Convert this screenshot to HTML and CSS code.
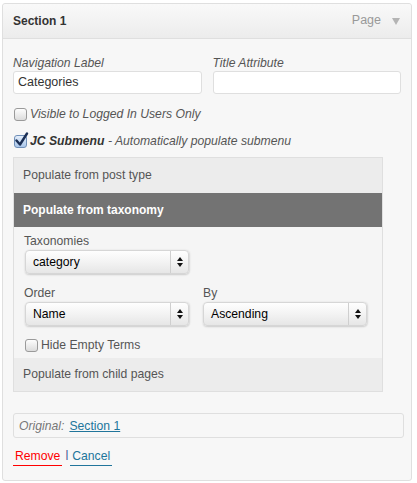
FILE: index.html
```html
<!DOCTYPE html>
<html>
<head>
<meta charset="utf-8">
<link rel="stylesheet" href="styles.css">
</head>
<body>
<div class="item">
  <div class="item-head">
    <span class="title">Section 1</span>
    <span class="controls"><span class="type">Page</span><svg class="toggle" width="8" height="7" viewBox="0 0 8 7"><path d="M0 0H8L4 7Z" fill="#b4b4b4"/></svg></span>
  </div>
  <div class="settings">
    <div class="fields">
      <div class="field"><span class="lbl">Navigation Label</span><span class="input">Categories</span></div>
      <div class="field"><span class="lbl">Title Attribute</span><span class="input"></span></div>
    </div>
    <div class="check-row"><span class="cb"></span><em class="ctext">Visible to Logged In Users Only</em></div>
    <div class="check-row jc"><span class="cb checked"><svg class="tick" width="15" height="15" viewBox="0 0 15 15"><path d="M2.5 8.5L6 12.5L13 1.5" fill="none" stroke="#1b2f55" stroke-width="2.4" stroke-linecap="round" stroke-linejoin="round"/></svg></span><em class="ctext"><b>JC Submenu</b> - Automatically populate submenu</em></div>
    <div class="panel">
      <div class="tab first">Populate from post type</div>
      <div class="tab active">Populate from taxonomy</div>
      <div class="tab-body">
        <div class="lbl2">Taxonomies</div>
        <div class="select"><span class="sv">category</span><span class="sa"><svg width="6" height="10" viewBox="0 0 6 10"><path d="M0 4H6L3 0Z M0 6H6L3 10Z" fill="#111"/></svg></span></div>
        <div class="two">
          <div class="col"><div class="lbl2">Order</div><div class="select"><span class="sv">Name</span><span class="sa"><svg width="6" height="10" viewBox="0 0 6 10"><path d="M0 4H6L3 0Z M0 6H6L3 10Z" fill="#111"/></svg></span></div></div>
          <div class="col second"><div class="lbl2">By</div><div class="select"><span class="sv">Ascending</span><span class="sa"><svg width="6" height="10" viewBox="0 0 6 10"><path d="M0 4H6L3 0Z M0 6H6L3 10Z" fill="#111"/></svg></span></div></div>
        </div>
        <div class="check-row hide"><span class="cb"></span><span class="ctext plain">Hide Empty Terms</span></div>
      </div>
      <div class="tab last">Populate from child pages</div>
    </div>
    <div class="original"><em>Original:</em><a class="link" href="#">Section 1</a></div>
    <div class="actions"><a class="remove" href="#">Remove</a><span class="sep">|</span><a class="cancel" href="#">Cancel</a></div>
  </div>
</div>
</body>
</html>
```

FILE: styles.css
```css
html, body {
  margin: 0;
  padding: 0;
  background: #fff;
}
body {
  font-family: "Liberation Sans", Arial, sans-serif;
  font-size: 12px;
  color: #333;
}
.item {
  margin: 3px 3px 0 2px;
  width: 410px;
  border: 1px solid #dfdfdf;
  border-radius: 3px;
  background: #f7f7f7;
  box-sizing: border-box;
}
.item-head {
  height: 34px;
  display: flex;
  align-items: center;
  justify-content: space-between;
  padding: 0 11px 0 10px;
  background: linear-gradient(#f9f9f9, #ececec);
  border-bottom: 1px solid #dfdfdf;
  border-radius: 3px 3px 0 0;
}
.title {
  font-weight: bold;
  font-size: 12px;
  color: #333;
  margin-top: -1px;
}
.controls {
  display: flex;
  align-items: center;
  color: #999;
  font-size: 12.5px;
  margin-top: -3px;
}
.toggle {
  margin-left: 11px;
  margin-top: 3px;
}
.settings {
  padding: 17px 10px 14px 10px;
}
.fields {
  display: flex;
  gap: 11px;
}
.field {
  display: flex;
  flex-direction: column;
  width: 190px;
}
.lbl {
  font-style: italic;
  color: #555;
  line-height: 15px;
  font-size: 12.2px;
}
.input {
  height: 23px;
  box-sizing: border-box;
  border: 1px solid #dfdfdf;
  border-radius: 3px;
  background: #fff;
  padding: 0 4px;
  line-height: 21px;
  font-size: 12.5px;
  color: #333;
}
.check-row {
  display: flex;
  align-items: center;
  height: 16px;
  margin-top: 12px;
}
.check-row.jc {
  margin-top: 11px;
}
.cb {
  position: relative;
  width: 13px;
  height: 13px;
  box-sizing: border-box;
  border: 1px solid #9a9a9a;
  border-radius: 3px;
  background: linear-gradient(#fdfdfd, #dcdcdc);
  margin: 0 3px 0 1px;
  flex: none;
}
.cb.checked {
  border-color: #6f8fb8;
  background: linear-gradient(#e4eefb, #a9c6ea);
}
.tick {
  position: absolute;
  left: -1px;
  top: -4px;
}
.ctext {
  font-style: italic;
  color: #555;
  font-size: 12.2px;
}
.ctext b {
  color: #333;
}
.ctext.plain {
  font-style: normal;
}
.panel {
  margin-top: 8px;
  width: 370px;
  border: 1px solid #dfdfdf;
  box-sizing: border-box;
}
.tab {
  background: #ececec;
  color: #555;
  padding: 0 9px;
  height: 34px;
  line-height: 34px;
  font-size: 12.2px;
}
.tab.first {
  height: 35px;
  line-height: 35px;
}
.tab.active {
  background: #737373;
  color: #fff;
  font-weight: bold;
  font-size: 12px;
}
.tab.last {
  height: 33px;
  line-height: 33px;
}
.tab-body {
  background: #f5f5f5;
  padding: 7px 10px 5px 10px;
}
.lbl2 {
  color: #555;
  line-height: 15px;
  font-size: 12.2px;
  margin-bottom: 1px;
}
.select {
  display: flex;
  width: 164px;
  height: 24px;
  box-sizing: border-box;
  margin-left: 1px;
  border: 1px solid #d6d6d6;
  border-radius: 4px;
  background: linear-gradient(#fefefe, #f3f3f3 50%, #e6e6e6);
  box-shadow: 0 1px 2px rgba(0,0,0,0.15), 1px 0 2px rgba(0,0,0,0.08);
  align-items: center;
}
.sv {
  flex: 1;
  padding-left: 7px;
  color: #000;
  font-size: 12.2px;
}
.sa {
  width: 17px;
  height: 100%;
  border-left: 1px solid #cfcfcf;
  display: flex;
  align-items: center;
  justify-content: center;
}
.two {
  display: flex;
  margin-top: 12px;
}
.col {
  width: 178px;
  flex: none;
}
.col.second {
  flex: 1;
  width: auto;
}
.col.second .lbl2 {
  padding-left: 1px;
}
.check-row.hide {
  margin-top: 11px;
}
.original {
  margin-top: 21px;
  height: 25px;
  box-sizing: border-box;
  border: 1px solid #dfdfdf;
  border-radius: 3px;
  display: flex;
  align-items: center;
  padding-left: 5px;
  width: 391px;
}
.original em {
  color: #777;
  font-size: 12.2px;
}
.link {
  color: #21759b;
  margin-left: 5px;
  font-size: 12.2px;
}
.actions {
  margin-top: 10px;
  display: flex;
  align-items: flex-start;
}
.actions a {
  display: inline-block;
  text-decoration: none;
  line-height: 17px;
  padding: 0 2px;
  font-size: 12.2px;
}
.remove {
  color: #f00;
  border-bottom: 1px solid #f00;
}
.cancel {
  color: #21759b;
  border-bottom: 1px solid #21759b;
}
.sep {
  color: #2a3c8a;
  margin: -2px 2px 0 3px;
  line-height: 17px;
  font-size: 11px;
}
```
